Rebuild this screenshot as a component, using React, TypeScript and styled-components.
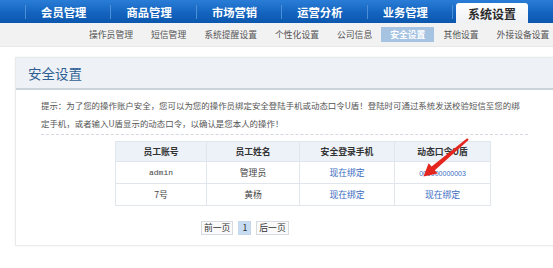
import React from 'react';
import styled, { createGlobalStyle } from 'styled-components';

const GlobalStyle = createGlobalStyle`
  html, body {
    margin: 0;
    padding: 0;
    background: #ffffff;
    overflow: hidden;
  }

  body {
    font-family: "Noto Sans CJK SC", "Liberation Sans", sans-serif;
    color: #444444;
  }
`;

const mainMenu = ['会员管理', '商品管理', '市场营销', '运营分析', '业务管理'];

const subMenu = [
  '操作员管理',
  '短信管理',
  '系统提醒设置',
  '个性化设置',
  '公司信息',
  '安全设置',
  '其他设置',
  '外接设备设置',
];

const operators: Array<{
  account: string;
  name: string;
  phone: string;
  token: string;
  mono?: boolean;
}> = [
  {
    account: 'admin', name: '管理员', phone: '现在绑定', token: '000000000003', mono: true,
  },
  {
    account: '7号', name: '黄杨', phone: '现在绑定', token: '现在绑定',
  },
];

const App: React.FC = () => (
  <Page>
    <GlobalStyle />
    <TopNav>
      {mainMenu.map((item) => (
        <React.Fragment key={item}>
          <NavDivider />
          <NavItem>{item}</NavItem>
        </React.Fragment>
      ))}
      <NavDivider />
      <ActiveTab>系统设置</ActiveTab>
    </TopNav>
    <SubNav>
      {subMenu.map((item, i) => (
        <React.Fragment key={item}>
          {i > 0 && <SubDivider />}
          <SubItem active={item === '安全设置'}>{item}</SubItem>
        </React.Fragment>
      ))}
    </SubNav>
    <Panel>
      <PanelHeader>安全设置</PanelHeader>
      <PanelBody>
        <Tips>
          提示：为了您的操作账户安全，您可以为您的操作员绑定安全登陆手机或动态口令U盾！登陆时可通过系统发送校验短信至您的绑
          <br />
          定手机，或者输入U盾显示的动态口令，以确认是您本人的操作！
        </Tips>
        <TableWrap>
          <Table>
            <thead>
              <tr>
                <Th width={90}>员工账号</Th>
                <Th width={92}>员工姓名</Th>
                <Th width={94}>安全登录手机</Th>
                <Th width={95}>动态口令U盾</Th>
              </tr>
            </thead>
            <tbody>
              {operators.map((op) => (
                <tr key={op.account}>
                  <Td mono={op.mono}>{op.account}</Td>
                  <Td>{op.name}</Td>
                  <Td><Link>{op.phone}</Link></Td>
                  <Td><Link small={op.mono}>{op.token}</Link></Td>
                </tr>
              ))}
            </tbody>
          </Table>
          <Arrow width="60" height="45" viewBox="0 0 60 45">
            <polygon
              points="53.8,4.8 19.8,35.2 22.6,38.6 8.5,41.5 13.6,28.2 16.6,31.4 52.2,3.2"
              fill="#e4261f"
            />
          </Arrow>
        </TableWrap>
        <Pager>
          <PageButton>前一页</PageButton>
          <PageButton current>1</PageButton>
          <PageButton>后一页</PageButton>
        </Pager>
      </PanelBody>
    </Panel>
  </Page>
);

const Page = styled.div`
  width: 553px;
  height: 268px;
  overflow: hidden;
`;

const TopNav = styled.div`
  display: flex;
  align-items: flex-end;
  height: 23px;
  padding-left: 25px;
  background: linear-gradient(#2a7dd6, #1262bd 60%, #0c57ae);
`;

const NavDivider = styled.div`
  align-self: center;
  width: 1px;
  height: 14px;
  background: #4a8fd8;
`;

const NavItem = styled.div`
  align-self: stretch;
  display: flex;
  align-items: center;
  justify-content: center;
  width: 84.4px;
  padding-right: 9px;
  box-sizing: border-box;
  color: #ffffff;
  font-size: 11.3px;
  font-weight: 700;
`;

const ActiveTab = styled.div`
  display: flex;
  align-items: center;
  justify-content: center;
  width: 72px;
  height: 20px;
  margin-left: 3px;
  border-radius: 3px 3px 0 0;
  background: linear-gradient(#ffffff, #eef1f4);
  color: #2a2a2a;
  font-size: 12px;
  font-weight: 700;
`;

const SubNav = styled.div`
  display: flex;
  align-items: center;
  height: 24px;
  padding-left: 80px;
  background: #f2f2f2;
  border-bottom: 1px solid #e9e9e9;
  box-sizing: border-box;
`;

const SubItem = styled.div<{ active?: boolean }>`
  padding: 0 9px;
  height: 15px;
  line-height: 15px;
  font-size: 8.8px;
  white-space: nowrap;
  color: ${({ active }) => (active ? '#ffffff' : '#555555')};
  background: ${({ active }) => (active ? '#a7c3e2' : 'transparent')};
  font-weight: ${({ active }) => (active ? 700 : 400)};
`;

const SubDivider = styled.div`
  width: 1px;
  height: 9px;
  background: #9a9a9a;
`;

const Panel = styled.div`
  width: 560px;
  margin: 10px 0 0 15px;
  border: 1px solid #e8ebee;
  border-right: none;
  box-shadow: 0 0 2px rgba(0, 0, 0, 0.06);
`;

const PanelHeader = styled.div`
  height: 30px;
  padding-left: 12px;
  line-height: 31px;
  background: #eef2f6;
  border-bottom: 2px solid #cbd2da;
  color: #2f5f93;
  font-size: 13.5px;
`;

const PanelBody = styled.div`
  padding: 6px 0 10px 25px;
`;

const Tips = styled.div`
  width: 487px;
  padding-bottom: 2px;
  border-bottom: 1px dashed #d3d8de;
  color: #555555;
  font-size: 8.45px;
  line-height: 18px;
  white-space: nowrap;
`;

const TableWrap = styled.div`
  position: relative;
  width: 371px;
  margin: 6px 0 0 74px;
`;

const Table = styled.table`
  width: 371px;
  border-collapse: collapse;
  table-layout: fixed;
  font-size: 8.8px;
`;

const Th = styled.th<{ width: number }>`
  width: ${({ width }) => width}px;
  height: 19px;
  padding: 0;
  border: 1px solid #e1e6ec;
  background: #edf2f8;
  color: #333333;
  font-weight: 700;
  text-align: center;
`;

const Td = styled.td<{ mono?: boolean }>`
  height: 21px;
  padding: 0;
  border: 1px solid #e1e6ec;
  text-align: center;
  color: #444444;
  font-family: ${({ mono }) => (mono ? '"Liberation Mono", monospace' : 'inherit')};
  font-size: ${({ mono }) => (mono ? '8px' : '8.8px')};
`;

const Link = styled.span<{ small?: boolean }>`
  color: #3a6cc2;
  font-family: ${({ small }) => (small ? '"Liberation Sans", sans-serif' : 'inherit')};
  font-size: ${({ small }) => (small ? '7px' : '8.8px')};
`;

const Arrow = styled.svg`
  position: absolute;
  left: 300px;
  top: -6px;
`;

const Pager = styled.div`
  display: flex;
  gap: 5px;
  margin: 15px 0 0 160px;
`;

const PageButton = styled.div<{ current?: boolean }>`
  height: 12px;
  padding: 0 ${({ current }) => (current ? '3px' : '2px')};
  line-height: 12px;
  border: 1px solid ${({ current }) => (current ? '#c5d8ec' : '#d6dbe1')};
  background: ${({ current }) => (current ? '#c7dcf0' : '#fafafa')};
  color: #333333;
  font-size: 8.8px;
`;

export default App;
